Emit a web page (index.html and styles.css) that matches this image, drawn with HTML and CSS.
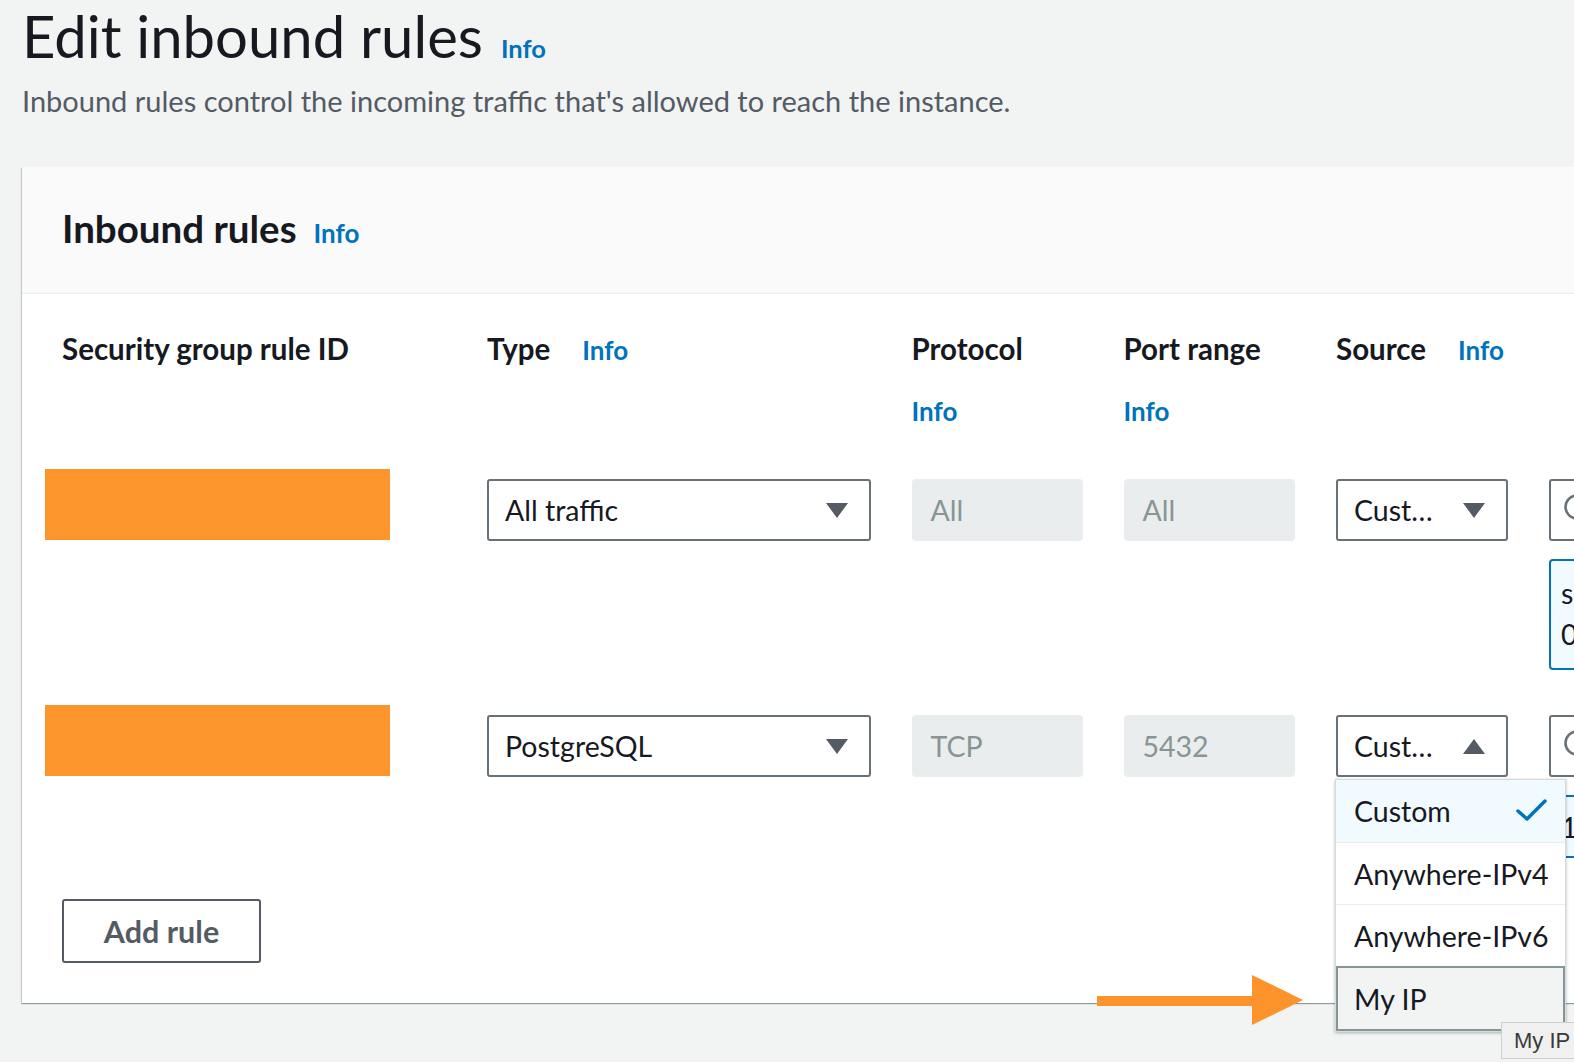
FILE: index.html
```html
<!DOCTYPE html>
<html lang="en">
<head>
<meta charset="utf-8">
<title>Edit inbound rules</title>
<link rel="stylesheet" href="styles.css">
</head>
<body>
<div class="page">
  <header class="page-head">
    <h1 class="title">Edit inbound rules<span class="info info-title">Info</span></h1>
    <p class="subtitle">Inbound rules control the incoming traffic that's allowed to reach the instance.</p>
  </header>

  <section class="card">
    <div class="card-head">
      <h2 class="card-title">Inbound rules<span class="info info-card">Info</span></h2>
    </div>
    <div class="card-body">
      <div class="row row-head">
        <div class="th">Security group rule ID</div>
        <div class="th"><span>Type</span><span class="info info-inline">Info</span></div>
        <div class="th"><span>Protocol</span><span class="info info-block">Info</span></div>
        <div class="th"><span>Port range</span><span class="info info-block">Info</span></div>
        <div class="th"><span>Source</span><span class="info info-inline">Info</span></div>
        <div class="th"></div>
      </div>

      <div class="row row-1">
        <div class="cell"><div class="redact"></div></div>
        <div class="cell"><div class="select"><span class="select-text">All traffic</span><span class="caret caret-down"></span></div></div>
        <div class="cell"><div class="disabled">All</div></div>
        <div class="cell"><div class="disabled">All</div></div>
        <div class="cell"><div class="select"><span class="select-text">Cust…</span><span class="caret caret-down"></span></div></div>
        <div class="cell">
          <div class="search">
            <svg class="search-icon" width="34" height="34" viewBox="0 0 34 34"><circle cx="14" cy="14" r="11.5" fill="none" stroke="#687078" stroke-width="2.6"/><line x1="22.5" y1="22.5" x2="31" y2="31" stroke="#687078" stroke-width="2.6" stroke-linecap="round"/></svg>
          </div>
          <div class="token token-tall"><span>sg-0c8e2f1a</span><span>0e3a7b5d</span></div>
        </div>
      </div>

      <div class="row row-2">
        <div class="cell"><div class="redact"></div></div>
        <div class="cell"><div class="select"><span class="select-text">PostgreSQL</span><span class="caret caret-down"></span></div></div>
        <div class="cell"><div class="disabled">TCP</div></div>
        <div class="cell"><div class="disabled">5432</div></div>
        <div class="cell source-cell">
          <div class="select select-open"><span class="select-text">Cust…</span><span class="caret caret-up"></span></div>
          <ul class="dropdown">
            <li class="option option-selected"><span>Custom</span>
              <svg class="check" width="34" height="26" viewBox="0 0 34 26"><polyline points="3,13 12,21 30,3" fill="none" stroke="#0073bb" stroke-width="3.5" stroke-linecap="round" stroke-linejoin="round"/></svg>
            </li>
            <li class="option">Anywhere-IPv4</li>
            <li class="option">Anywhere-IPv6</li>
            <li class="option option-hover">My IP</li>
          </ul>
        </div>
        <div class="cell">
          <div class="search">
            <svg class="search-icon" width="34" height="34" viewBox="0 0 34 34"><circle cx="14" cy="14" r="11.5" fill="none" stroke="#687078" stroke-width="2.6"/><line x1="22.5" y1="22.5" x2="31" y2="31" stroke="#687078" stroke-width="2.6" stroke-linecap="round"/></svg>
          </div>
          <div class="token"><span>172.31.0.0/16</span></div>
        </div>
      </div>

      <button class="btn">Add rule</button>
    </div>
  </section>

  <svg class="arrow" width="206" height="50" viewBox="0 0 206 50"><rect x="0" y="21" width="160" height="10" fill="#fd932b"/><polygon points="155,0 206,25 155,50" fill="#fd932b"/></svg>
  <div class="tooltip">My IP</div>
</div>
</body>
</html>
```

FILE: styles.css
```css
html, body {
  margin: 0;
  padding: 0;
}
body {
  width: 1574px;
  height: 1062px;
  overflow: hidden;
  background: #f2f3f3;
  font-family: Lato, "Open Sans", sans-serif;
  color: #16191f;
}
.page {
  position: relative;
  height: 1062px;
  padding-left: 22px;
}
.title {
  margin: 1px 0 0;
  font-size: 58px;
  line-height: 70px;
  font-weight: 400;
  color: #16191f;
}
.info {
  color: #0073bb;
  font-weight: 700;
  font-size: 26px;
}
.info-title {
  font-size: 25.5px;
  margin-left: 18px;
}
.subtitle {
  margin: -2px 0 0;
  font-size: 29px;
  line-height: 40px;
  color: #545b64;
}
.card {
  margin-top: 46px;
  width: 1700px;
  background: #fff;
  box-shadow: 0 1px 1px 0 rgba(0, 28, 36, 0.3), -1px 1px 1px 0 rgba(0, 28, 36, 0.15);
}
.card-head {
  height: 126px;
  padding: 0 40px;
  display: flex;
  align-items: center;
  background: #fafafa;
  border-bottom: 1px solid #eaeded;
}
.card-title {
  margin: 0;
  font-size: 38.5px;
  line-height: 46px;
  font-weight: 700;
}
.info-card {
  margin-left: 17px;
}
.card-body {
  padding: 37px 0 40px 40px;
}
.row {
  display: grid;
  grid-template-columns: 384px 383.5px 171px 171.5px 172px 300px;
  column-gap: 41px;
}
.row-1 {
  margin-top: 50px;
}
.row-2 {
  margin-top: 45px;
}
.th {
  font-size: 29.5px;
  line-height: 36px;
  font-weight: 700;
}
.info-inline {
  margin-left: 32px;
}
.info-block {
  display: block;
  margin-top: 26px;
  line-height: 36px;
}
.cell {
  min-width: 0;
}
.redact {
  margin: -10px 0 0 -17px;
  width: 345px;
  height: 71px;
  background: #fd952d;
}
.select {
  box-sizing: border-box;
  height: 62px;
  border: 2px solid #687078;
  border-radius: 3px;
  background: #fff;
  display: flex;
  align-items: center;
  justify-content: space-between;
  padding: 0 21px 0 16px;
  font-size: 28.5px;
}
.caret {
  width: 0;
  height: 0;
  border-left: 11px solid transparent;
  border-right: 11px solid transparent;
}
.caret-down {
  border-top: 15px solid #545b64;
}
.caret-up {
  border-bottom: 15px solid #545b64;
}
.disabled {
  box-sizing: border-box;
  height: 62px;
  border-radius: 4px;
  background: #eaeded;
  display: flex;
  align-items: center;
  padding-left: 19px;
  font-size: 28.5px;
  color: #879596;
}
.search {
  box-sizing: border-box;
  height: 62px;
  border: 2px solid #687078;
  border-radius: 3px;
  background: #fff;
  display: flex;
  align-items: center;
  padding-left: 12px;
}
.token {
  box-sizing: border-box;
  margin-top: 18px;
  height: 63px;
  border: 2px solid #0073bb;
  border-radius: 4px;
  background: #f1faff;
  padding: 10px 10px;
  display: flex;
  flex-direction: column;
  font-size: 28.5px;
  line-height: 41px;
}
.token-tall {
  height: 111px;
  padding-top: 12px;
}
.source-cell {
  position: relative;
}
.dropdown {
  position: absolute;
  top: 64px;
  left: -1px;
  width: 229px;
  margin: 0;
  padding: 0;
  list-style: none;
  background: #fff;
  border: 1px solid #d5dbdb;
  box-shadow: 0 1px 3px rgba(0, 28, 36, 0.3);
  z-index: 2;
}
.option {
  box-sizing: border-box;
  height: 62px;
  display: flex;
  align-items: center;
  justify-content: space-between;
  padding: 0 16px 0 18px;
  font-size: 28.5px;
  border-top: 1px solid #eaeded;
}
.option:first-child {
  border-top: none;
}
.option-selected {
  background: #f1faff;
}
.option-hover {
  height: 65px;
  background: #f2f3f3;
  border: 2px solid #879596;
  padding-left: 16px;
}
.btn {
  margin-top: 41px;
  width: 199px;
  height: 64px;
  border: 2px solid #545b64;
  border-radius: 3px;
  background: #fff;
  font-family: Lato, "Open Sans", sans-serif;
  font-size: 30.5px;
  font-weight: 700;
  color: #545b64;
}
.arrow {
  position: absolute;
  left: 1097px;
  top: 974px;
}
.tooltip {
  position: absolute;
  left: 1501px;
  top: 1021px;
  z-index: 5;
  width: 90px;
  height: 37px;
  box-sizing: border-box;
  border: 1px solid #cfcfcf;
  background: #f0f0f0;
  padding-left: 12px;
  font-family: "Liberation Sans", sans-serif;
  font-size: 22px;
  line-height: 35px;
  color: #3a3a3a;
}
```
